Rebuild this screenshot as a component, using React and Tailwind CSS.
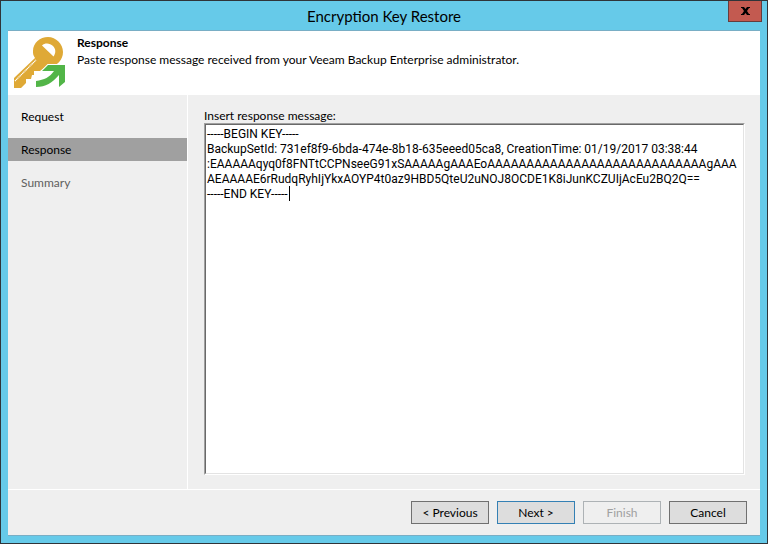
import { useState } from "react";

const STEPS = [
    { id: "request", label: "Request", state: "done" },
    { id: "response", label: "Response", state: "current" },
    { id: "summary", label: "Summary", state: "pending" },
];

const RESPONSE_MESSAGE = [
    "-----BEGIN KEY-----",
    "BackupSetId: 731ef8f9-6bda-474e-8b18-635eeed05ca8, CreationTime: 01/19/2017 03:38:44",
    ":EAAAAAqyq0f8FNTtCCPNseeG91xSAAAAAgAAAEoAAAAAAAAAAAAAAAAAAAAAAAAAAAAgAAA",
    "AEAAAAE6rRudqRyhIjYkxAOYP4t0az9HBD5QteU2uNOJ8OCDE1K8iJunKCZUIjAcEu2BQ2Q==",
    "-----END KEY-----",
].join("\n");

function KeyIcon() {
    return (
        <svg className="w-[52px] h-[51px] shrink-0" viewBox="0 0 52 51" aria-hidden="true">
            <path
                fill="#dfa936"
                fillRule="evenodd"
                d="M34 0C42 0 49 7 49 15C49 23 43 29 35 30L30 31L26 34L20 34L20 38L18 38L17 42L12 42L12 46L7 51L0 51L0 41L21 21C19 18 19 17 19 14C19 6 26 0 34 0ZM28 8.5L39.5 19.5C42 16 42 12 39 9C36 6 31 5.5 28 8.5Z"
            />
            <path d="M1 44L22 23" stroke="#fff" strokeWidth="1.3" strokeDasharray="1.2 0.5" fill="none" />
            <path
                fill="#52b548"
                stroke="#fff"
                strokeWidth="2"
                paintOrder="stroke"
                d="M34 28L51 28L51 45L45 50L45 38C38 46 32 50 22 50L22 44C30 43 36 40 40 34L28 34Z"
            />
        </svg>
    );
}

function WizardButton({ children, variant = "normal", disabled = false }) {
    return (
        <button
            type="button"
            disabled={disabled}
            className={`w-[78px] h-[23px] border flex items-center justify-center ${
                disabled
                    ? "bg-[#efefef] border-[#adb2b5] text-[#a0a0a0]"
                    : variant === "primary"
                    ? "bg-[#dddddd] border-[#3480b4]"
                    : "bg-[#dddddd] border-[#707070]"
            }`}
        >
            {children}
        </button>
    );
}

export default function App() {
    const [message, setMessage] = useState(RESPONSE_MESSAGE);

    return (
        <div className="min-h-screen flex flex-col bg-[#66cae9] border border-[#2f3439] text-black font-[Lato,'Noto_Sans',sans-serif] text-[12px] leading-[15px]">
            <header className="relative h-[29px] flex items-center justify-center">
                <h1 className="text-[15px] leading-[20px]">Encryption Key Restore</h1>
                <button
                    type="button"
                    aria-label="Close"
                    className="absolute right-[5px] top-0 w-[34px] h-[21px] bg-[#c35a50] border border-t-0 border-[#663c3d] flex items-center justify-center"
                >
                    <svg className="w-[9px] h-[8px]" viewBox="0 0 9 8" aria-hidden="true">
                        <path d="M0 0H3L4.5 2L6 0H9V1H8L6 4L8 7H9V8H6L4.5 6L3 8H0V7H1L3 4L1 1H0Z" fill="#000" />
                    </svg>
                </button>
            </header>

            <main className="flex-1 flex flex-col mx-[7px] mb-[7px] bg-[#efefef] border-t border-b border-[#79aec5]">
                <section className="h-16 flex bg-white pl-[6px] pt-[6px]">
                    <KeyIcon />
                    <div className="pl-[11px]">
                        <h2 className="font-bold leading-[12px]">Response</h2>
                        <p className="pt-[3px]">Paste response message received from your Veeam Backup Enterprise administrator.</p>
                    </div>
                </section>

                <div className="flex-1 flex">
                    <nav className="w-[180px] shrink-0 border-r border-white pt-[10px]">
                        <ol className="flex flex-col gap-[10px]">
                            {STEPS.map((step) => (
                                <li
                                    key={step.id}
                                    aria-current={step.state === "current" ? "step" : undefined}
                                    className={`h-[23px] pl-[13px] flex items-center ${
                                        step.state === "current" ? "bg-[#a0a0a0]" : ""
                                    } ${step.state === "pending" ? "text-[#606060]" : ""}`}
                                >
                                    {step.label}
                                </li>
                            ))}
                        </ol>
                    </nav>

                    <div className="flex-1 min-w-0 flex flex-col pl-4 pr-[15px] pt-[13px] pb-[14px]">
                        <label htmlFor="response-message">Insert response message:</label>
                        <div className="relative flex-1 flex border border-t-[#a0a0a0] border-l-[#a0a0a0] border-r-white border-b-white">
                            <textarea
                                id="response-message"
                                value={message}
                                onChange={(e) => setMessage(e.target.value)}
                                spellCheck={false}
                                className="flex-1 min-w-0 min-h-[200px] resize-none overflow-hidden outline-none bg-white pl-px pt-[2px] font-[Roboto,'Noto_Sans',sans-serif] whitespace-pre border border-t-[#696969] border-l-[#696969] border-r-[#e3e3e3] border-b-[#e3e3e3]"
                            />
                            <span className="absolute left-[84px] top-[62px] w-px h-[15px] bg-black" />
                        </div>
                    </div>
                </div>

                <footer className="border-t border-white flex justify-end gap-2 pt-[11px] pb-[11px] pr-[13px]">
                    <WizardButton>&lt; Previous</WizardButton>
                    <WizardButton variant="primary">Next &gt;</WizardButton>
                    <WizardButton disabled>Finish</WizardButton>
                    <WizardButton>Cancel</WizardButton>
                </footer>
            </main>
        </div>
    );
}
